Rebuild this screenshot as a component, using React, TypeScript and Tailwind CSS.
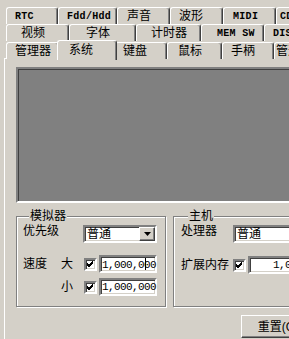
import React from 'react';

type Tab = { label: string; w: number; pl: number; mono?: boolean; active?: boolean };

const rows: Tab[][] = [
  [
    { label: 'RTC', w: 52, pl: 8, mono: true },
    { label: 'Fdd/Hdd', w: 59, pl: 8, mono: true },
    { label: '声音', w: 53, pl: 9 },
    { label: '波形', w: 53, pl: 8 },
    { label: 'MIDI', w: 53, pl: 9, mono: true },
    { label: 'CD-ROM', w: 60, pl: 3, mono: true },
  ],
  [
    { label: '视频', w: 63, pl: 14 },
    { label: '字体', w: 67, pl: 16 },
    { label: '计时器', w: 65, pl: 14 },
    { label: 'MEM SW', w: 63, pl: 15, mono: true },
    { label: 'DISK', w: 63, pl: 8, mono: true },
  ],
  [
    { label: '管理器', w: 53, pl: 8 },
    { label: '系统', w: 60, pl: 11, active: true },
    { label: '键盘', w: 52, pl: 7 },
    { label: '鼠标', w: 55, pl: 10 },
    { label: '手柄', w: 52, pl: 8 },
    { label: '管道', w: 52, pl: 1 },
  ],
];

const sunken =
  'border-2 border-t-[#808080] border-l-[#808080] border-b-white border-r-white shadow-[inset_1px_1px_#404040,inset_-1px_-1px_#d4d0c8]';
const raised =
  'border border-t-white border-l-white border-r-[#404040] border-b-[#404040] shadow-[inset_-1px_-1px_#808080]';

const TabItem: React.FC<{ tab: Tab }> = ({ tab }) => (
  <div
    style={{ width: tab.w, paddingLeft: tab.pl }}
    className={`shrink-0 flex items-center bg-[#d4d0c8] border-t border-l border-white border-r border-r-[#404040] rounded-t-[3px] shadow-[inset_-1px_0_#808080] whitespace-nowrap overflow-hidden ${
      tab.active ? 'relative z-10 -mt-[2px] h-[20px] -mx-[2px] pb-[2px]' : 'h-[17px]'
    } ${tab.mono ? "font-['Liberation_Mono',monospace] font-bold text-[10px] tracking-[0.3px]" : 'text-[12px]'}`}
  >
    {tab.label}
  </div>
);

const Check: React.FC = () => (
  <div className={`w-[13px] h-[13px] shrink-0 bg-white ${sunken} flex items-center justify-center`}>
    <svg width="7" height="7" viewBox="0 0 7 7">
      <path d="M0 2 L2 4 L6 0 M0 3 L2 5 L6 1 M0 4 L2 6 L6 2" stroke="#000" strokeWidth="1" fill="none" shapeRendering="crispEdges" />
    </svg>
  </div>
);

const Select: React.FC<{ w: number }> = ({ w }) => (
  <div style={{ width: w }} className={`h-[18px] bg-white ${sunken} flex items-center justify-between`}>
    <span className="pl-[2px] text-[12px] leading-none">普通</span>
    <div className={`w-[16px] h-[14px] bg-[#d4d0c8] ${raised} flex items-center justify-center`}>
      <svg width="7" height="4" viewBox="0 0 7 4">
        <path d="M0 0 H7 L3.5 4 Z" fill="#000" />
      </svg>
    </div>
  </div>
);

const Num: React.FC<{ caret?: boolean; w: number; right?: boolean }> = ({ caret, w, right }) => (
  <div
    style={{ width: w }}
    className={`h-[18px] bg-white ${sunken} flex items-center ${right ? 'justify-end pr-[3px]' : 'pl-[1px]'} font-['Liberation_Mono',monospace] text-[11px] tracking-[-0.6px] leading-none`}
  >
    {caret ? (
      <span className="whitespace-nowrap">
        1,000,0
        <span className="inline-block w-px h-[12px] bg-black align-[-2px] -mr-px translate-x-[1px]" />
        00
      </span>
    ) : (
      <span>1,000,000</span>
    )}
  </div>
);

const App: React.FC = () => {
  return (
    <div className="w-[289px] h-[339px] overflow-hidden bg-[#d4d0c8] text-black font-['Liberation_Sans','Noto_Sans_CJK_SC',sans-serif]">
      {/* tab rows */}
      <div className="pt-[7px] pl-[6px] flex flex-col">
        {rows.map((row, i) => (
          <div key={i} className={`flex h-[17px] ${i === 2 ? 'items-start pt-px' : ''}`}>
            {row.map((t) => (
              <TabItem key={t.label} tab={t} />
            ))}
          </div>
        ))}
      </div>

      {/* panel */}
      <div className="ml-[4px] w-[400px] h-[300px] border-t border-l border-white pl-[11px] pt-[8px]">
        <div className={`w-[320px] h-[136px] bg-[#808080] ${sunken} shadow-[inset_1px_1px_#404040]`} />

        <div className="flex items-start mt-[5px]">
          <fieldset className="w-[150px] border border-[#808080] shadow-[inset_1px_1px_#fff,1px_1px_#fff] pl-[6px] pb-[10px]">
            <legend className="ml-[6px] px-px text-[12px] leading-[16px] bg-[#d4d0c8]">模拟器</legend>
            <div className="flex items-start mt-px h-[18px] text-[12px]">
              <span className="w-[60px] leading-[13px]">优先级</span>
              <Select w={74} />
            </div>
            <div className="flex items-center mt-[12px] h-[18px] text-[12px]">
              <span className="w-[37px]">速度</span>
              <span className="w-[24px] pl-px">大</span>
              <Check />
              <div className="ml-[2px]">
                <Num w={58} caret />
              </div>
            </div>
            <div className="flex items-center mt-[5px] h-[18px] text-[12px]">
              <span className="w-[61px] pl-[38px]">小</span>
              <Check />
              <div className="ml-[2px]">
                <Num w={58} />
              </div>
            </div>
          </fieldset>

          <fieldset className="ml-[7px] w-[200px] border border-[#808080] shadow-[inset_1px_1px_#fff,1px_1px_#fff] pl-[7px] pb-[10px] self-stretch">
            <legend className="ml-[7px] px-px text-[12px] leading-[16px] bg-[#d4d0c8]">主机</legend>
            <div className="flex items-start mt-px h-[18px] text-[12px]">
              <span className="w-[52px] leading-[13px]">处理器</span>
              <Select w={110} />
            </div>
            <div className="flex items-center mt-[13px] h-[18px] text-[12px]">
              <span className="w-[52px]">扩展内存</span>
              <Check />
              <div className="ml-[2px]">
                <Num w={84} right />
              </div>
            </div>
          </fieldset>
        </div>

        <div className="mt-[8px] ml-[225px]">
          <button className={`w-[75px] h-[23px] bg-[#d4d0c8] ${raised} text-[12px] flex items-center justify-center`}>
            重置(Q)
          </button>
        </div>
      </div>
    </div>
  );
};

export default App;
